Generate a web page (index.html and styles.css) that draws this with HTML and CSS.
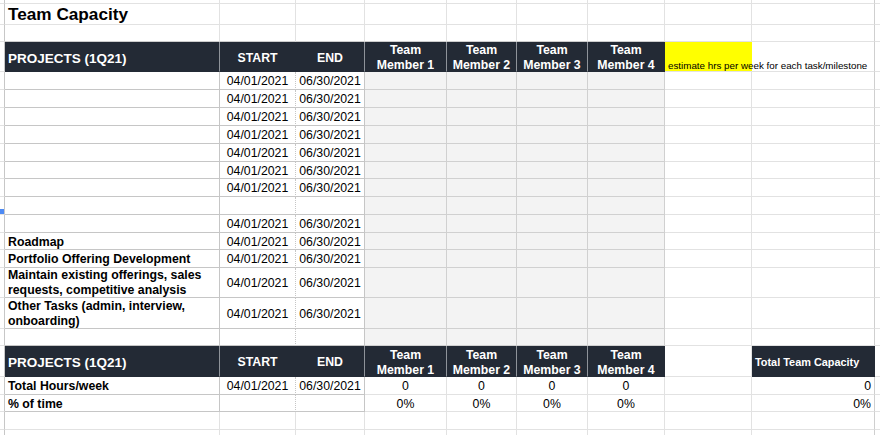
FILE: index.html
```html
<!DOCTYPE html>
<html lang="en">
<head>
<meta charset="utf-8">
<title>Team Capacity</title>
<link rel="stylesheet" href="styles.css">
</head>
<body>
<div class="sheet">
  <!-- top gutter -->
  <div class="row"><div class="c top g"></div><div class="c top"></div><div class="c top"></div><div class="c top"></div><div class="c top"></div><div class="c top"></div><div class="c top"></div><div class="c top"></div><div class="c top"></div><div class="c top edge"></div><div class="c top end"></div></div>
  <!-- title -->
  <div class="row"><div class="c g"></div><div class="c title">Team Capacity</div><div class="c"></div><div class="c"></div><div class="c"></div><div class="c"></div><div class="c"></div><div class="c"></div><div class="c"></div><div class="c edge"></div><div class="c end"></div></div>
  <div class="row"><div class="c g"></div><div class="c above"></div><div class="c above"></div><div class="c above"></div><div class="c above"></div><div class="c above"></div><div class="c above"></div><div class="c above"></div><div class="c"></div><div class="c edge"></div><div class="c end"></div></div>
  <!-- header -->
  <div class="row"><div class="c g"></div><div class="c hd left big">PROJECTS (1Q21)</div><div class="c hd flat">START</div><div class="c hd">END</div><div class="c hd">Team Member 1</div><div class="c hd">Team Member 2</div><div class="c hd">Team Member 3</div><div class="c hd flat">Team Member 4</div><div class="c note edge">estimate hrs per week for each task/milestone</div><div class="c end"></div></div>
  <!-- dated rows -->
  <div class="row"><div class="c g"></div><div class="c da"></div><div class="c db">04/01/2021</div><div class="c dc">06/30/2021</div><div class="c gr"></div><div class="c gr"></div><div class="c gr"></div><div class="c gr"></div><div class="c"></div><div class="c edge"></div><div class="c end"></div></div>
  <div class="row"><div class="c g"></div><div class="c da"></div><div class="c db">04/01/2021</div><div class="c dc">06/30/2021</div><div class="c gr"></div><div class="c gr"></div><div class="c gr"></div><div class="c gr"></div><div class="c"></div><div class="c edge"></div><div class="c end"></div></div>
  <div class="row"><div class="c g"></div><div class="c da"></div><div class="c db">04/01/2021</div><div class="c dc">06/30/2021</div><div class="c gr"></div><div class="c gr"></div><div class="c gr"></div><div class="c gr"></div><div class="c"></div><div class="c edge"></div><div class="c end"></div></div>
  <div class="row"><div class="c g"></div><div class="c da"></div><div class="c db">04/01/2021</div><div class="c dc">06/30/2021</div><div class="c gr"></div><div class="c gr"></div><div class="c gr"></div><div class="c gr"></div><div class="c"></div><div class="c edge"></div><div class="c end"></div></div>
  <div class="row"><div class="c g"></div><div class="c da"></div><div class="c db">04/01/2021</div><div class="c dc">06/30/2021</div><div class="c gr"></div><div class="c gr"></div><div class="c gr"></div><div class="c gr"></div><div class="c"></div><div class="c edge"></div><div class="c end"></div></div>
  <div class="row"><div class="c g"></div><div class="c da"></div><div class="c db">04/01/2021</div><div class="c dc">06/30/2021</div><div class="c gr"></div><div class="c gr"></div><div class="c gr"></div><div class="c gr"></div><div class="c"></div><div class="c edge"></div><div class="c end"></div></div>
  <div class="row"><div class="c g"></div><div class="c da"></div><div class="c db">04/01/2021</div><div class="c dc">06/30/2021</div><div class="c gr"></div><div class="c gr"></div><div class="c gr"></div><div class="c gr"></div><div class="c"></div><div class="c edge"></div><div class="c end"></div></div>
  <!-- blank row with selection marker -->
  <div class="row"><div class="c g"><span class="marker"></span></div><div class="c da"></div><div class="c db"></div><div class="c dc"></div><div class="c gr"></div><div class="c gr"></div><div class="c gr"></div><div class="c gr"></div><div class="c"></div><div class="c edge"></div><div class="c end"></div></div>
  <div class="row"><div class="c g"></div><div class="c da"></div><div class="c db">04/01/2021</div><div class="c dc">06/30/2021</div><div class="c gr"></div><div class="c gr"></div><div class="c gr"></div><div class="c gr"></div><div class="c"></div><div class="c edge"></div><div class="c end"></div></div>
  <div class="row"><div class="c g"></div><div class="c da">Roadmap</div><div class="c db">04/01/2021</div><div class="c dc">06/30/2021</div><div class="c gr"></div><div class="c gr"></div><div class="c gr"></div><div class="c gr"></div><div class="c"></div><div class="c edge"></div><div class="c end"></div></div>
  <div class="row"><div class="c g"></div><div class="c da">Portfolio Offering Development</div><div class="c db">04/01/2021</div><div class="c dc">06/30/2021</div><div class="c gr"></div><div class="c gr"></div><div class="c gr"></div><div class="c gr"></div><div class="c"></div><div class="c edge"></div><div class="c end"></div></div>
  <div class="row"><div class="c g"></div><div class="c da wrap">Maintain existing offerings, sales requests, competitive analysis</div><div class="c db">04/01/2021</div><div class="c dc">06/30/2021</div><div class="c gr"></div><div class="c gr"></div><div class="c gr"></div><div class="c gr"></div><div class="c"></div><div class="c edge"></div><div class="c end"></div></div>
  <div class="row"><div class="c g"></div><div class="c da wrap">Other Tasks (admin, interview, onboarding)</div><div class="c db">04/01/2021</div><div class="c dc">06/30/2021</div><div class="c gr"></div><div class="c gr"></div><div class="c gr"></div><div class="c gr"></div><div class="c"></div><div class="c edge"></div><div class="c end"></div></div>
  <div class="row"><div class="c g"></div><div class="c da"></div><div class="c db"></div><div class="c dc"></div><div class="c gr"></div><div class="c gr"></div><div class="c gr"></div><div class="c gr"></div><div class="c"></div><div class="c edge"></div><div class="c end"></div></div>
  <!-- summary header -->
  <div class="row"><div class="c g"></div><div class="c hd left big">PROJECTS (1Q21)</div><div class="c hd flat">START</div><div class="c hd">END</div><div class="c hd">Team Member 1</div><div class="c hd">Team Member 2</div><div class="c hd">Team Member 3</div><div class="c hd flat">Team Member 4</div><div class="c"></div><div class="c hd left small flat">Total Team Capacity</div><div class="c end"></div></div>
  <div class="row"><div class="c g"></div><div class="c da">Total Hours/week</div><div class="c db">04/01/2021</div><div class="c dc">06/30/2021</div><div class="c num">0</div><div class="c num">0</div><div class="c num">0</div><div class="c num">0</div><div class="c"></div><div class="c edge right">0</div><div class="c end"></div></div>
  <div class="row"><div class="c g"></div><div class="c da">% of time</div><div class="c db"></div><div class="c dc"></div><div class="c num">0%</div><div class="c num">0%</div><div class="c num">0%</div><div class="c num">0%</div><div class="c"></div><div class="c edge right">0%</div><div class="c end"></div></div>
  <div class="row"><div class="c g"></div><div class="c"></div><div class="c"></div><div class="c"></div><div class="c"></div><div class="c"></div><div class="c"></div><div class="c"></div><div class="c"></div><div class="c edge"></div><div class="c end"></div></div>
  <div class="row"><div class="c g"></div><div class="c"></div><div class="c"></div><div class="c"></div><div class="c"></div><div class="c"></div><div class="c"></div><div class="c"></div><div class="c"></div><div class="c edge"></div><div class="c end"></div></div>
</div>
</body>
</html>
```
FILE: styles.css
```css
* {
  box-sizing: border-box;
}

html,
body {
  margin: 0;
  padding: 0;
  background: #ffffff;
  overflow: hidden;
}

body {
  font-family: "Liberation Sans", Arial, sans-serif;
  font-size: 12.3px;
  color: #000000;
}

.sheet {
  display: grid;
  grid-template-columns: 5px 215px 76px 69px 82px 70px 71px 77px 87px 123px 5px;
  grid-template-rows: 4px 21px 17px 30px 18px 18px 18px 18px 18px 17px 18px 18px 18px 17px 18px 30px 31px 17px 31px 18px 17px 18px 18px;
  width: 880px;
  height: 435px;
  overflow: hidden;
}

.row {
  display: contents;
}

.c {
  display: flex;
  align-items: center;
  min-width: 0;
  padding: 1px 3px 0;
  white-space: nowrap;
  overflow: hidden;
  border-right: 1px solid #e2e2e2;
  border-bottom: 1px solid #e2e2e2;
}

.g {
  padding: 0;
  align-items: flex-end;
  border-right-color: #c7c7c7;
}

.marker {
  display: block;
  width: 4px;
  height: 5px;
  background: #4d8af4;
}

.edge {
  border-right-color: #cfcfcf;
}

.end {
  border-right: none;
}

.title {
  font-size: 17.2px;
  font-weight: bold;
}

.above {
  border-bottom-color: #cdcdcd;
}

/* dark header cells */
.hd {
  background: #232a35;
  color: #ffffff;
  font-weight: bold;
  justify-content: center;
  text-align: center;
  white-space: normal;
  line-height: 15px;
  padding-top: 3px;
  border-bottom-color: #232a35;
  border-right-color: #8e939a;
}

.hd.left {
  justify-content: flex-start;
  text-align: left;
}

.hd.big {
  font-size: 13.5px;
}

.hd.small {
  font-size: 10.9px;
}

.hd.flat {
  border-right-color: #232a35;
}

/* yellow note overflowing into the next column */
.note {
  grid-column: span 2;
  align-items: flex-end;
  padding: 0 0 0 3px;
  font-size: 9.8px;
  background: linear-gradient(90deg, #ffff00 0, #ffff00 87px, #ffffff 87px);
}

/* project/date data block */
.da {
  font-weight: bold;
  border-bottom-color: #c6c6c6;
  border-right-color: #c6c6c6;
}

.db {
  justify-content: center;
  border-bottom-color: #c6c6c6;
  border-right: 1px dotted #c6c6c6;
}

.dc {
  justify-content: center;
  border-bottom-color: #c6c6c6;
  border-right-color: #c6c6c6;
}

.wrap {
  white-space: normal;
  line-height: 15px;
}

/* grey input area */
.gr {
  background: #f3f3f3;
  border-right-color: #d0d0d0;
  border-bottom-color: #d0d0d0;
}

.num {
  justify-content: center;
}

.right {
  justify-content: flex-end;
}
```
